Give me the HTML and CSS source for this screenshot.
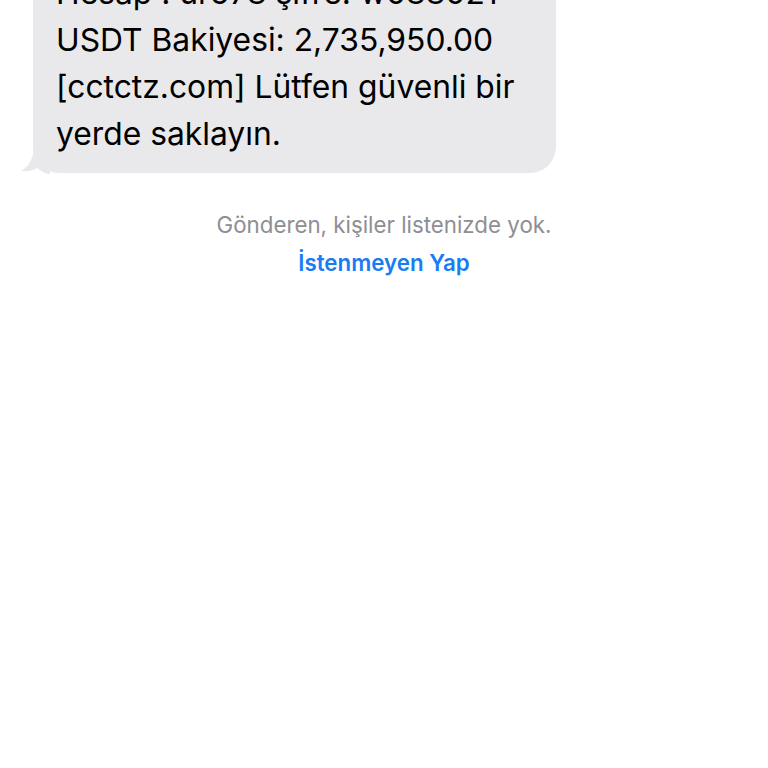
FILE: index.html
```html
<!DOCTYPE html>
<html lang="tr">
<head>
<meta charset="utf-8">
<link rel="stylesheet" href="styles.css">
</head>
<body>
<main class="thread">
  <div class="row">
    <div class="bubble">
      <p class="msg">Hesap : ur578 şifre: w088021<br>USDT Bakiyesi: 2,735,950.00<br>[cctctz.com] Lütfen güvenli bir<br>yerde saklayın.</p>
      <svg class="tail" width="30" height="26" viewBox="0 0 30 26" aria-hidden="true">
        <path d="M14 0 L30 0 L30 26 C24 26 20 22 17 20 C14 22 8 24 1 23 C8 19 13 12 14 0 Z" fill="#e9e9eb"/>
      </svg>
    </div>
  </div>
  <p class="notice">Gönderen, kişiler listenizde yok.</p>
  <p class="action">İstenmeyen Yap</p>
</main>
</body>
</html>
```
FILE: styles.css
```css
html, body {
  margin: 0;
  padding: 0;
  background: #ffffff;
  overflow: hidden;
  height: 768px;
}
.thread {
  font-family: Inter, "Liberation Sans", sans-serif;
  display: flex;
  flex-direction: column;
}
.row {
  padding-left: 33px;
  margin-top: -43px;
}
.bubble {
  position: relative;
  width: 523px;
  box-sizing: border-box;
  background: #e9e9eb;
  border-radius: 26px;
  padding: 12px 0 16px 23px;
}
.msg {
  margin: 0;
  font-size: 31.8px;
  line-height: 47px;
  color: #000;
  letter-spacing: 0;
}
.tail {
  position: absolute;
  left: -13px;
  bottom: -1px;
}
.notice {
  margin: 38px 0 0 0;
  text-align: center;
  font-size: 22.3px;
  line-height: 28px;
  color: #8e8e93;
  padding-left: 0;
}
.action {
  margin: 10px 0 0 0;
  text-align: center;
  font-size: 22.3px;
  line-height: 28px;
  font-weight: 600;
  color: #1a7cf2;
}
```
